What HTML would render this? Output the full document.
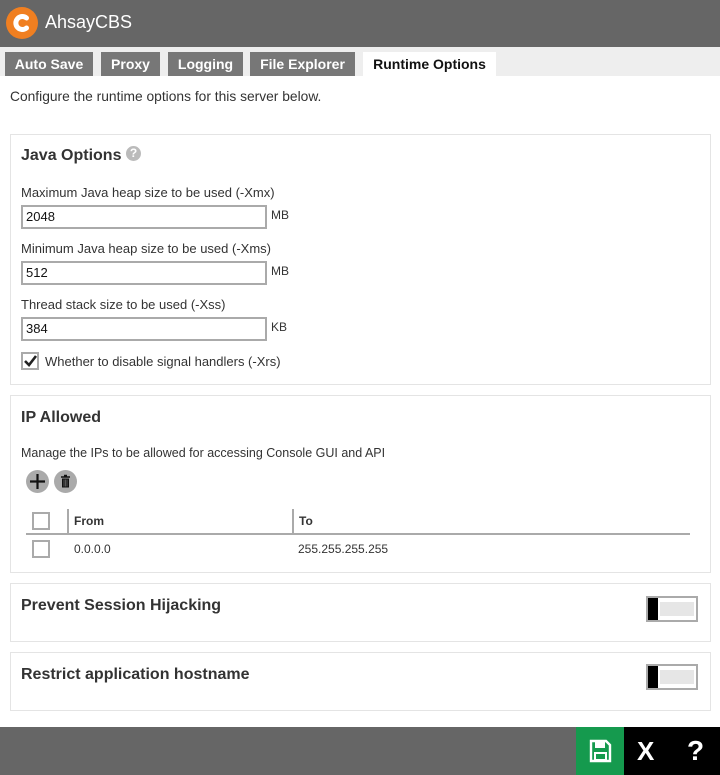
<!DOCTYPE html>
<html><head><meta charset="utf-8"><style>
*{box-sizing:border-box;margin:0;padding:0}
body{width:720px;height:775px;position:relative;background:#fff;font-family:"Liberation Sans",Arial,sans-serif;color:#333;overflow:hidden}
.a{position:absolute}
.hdr{left:0;top:0;width:720px;height:47px;background:#666}
.tabbar{left:0;top:47px;width:720px;height:29px;background:#eee}
.tab{top:52px;height:24px;background:#777;color:#fff;font-weight:bold;font-size:14px;line-height:24px;text-align:center}
.panel{left:10px;width:701px;border:1px solid #e4e4e4;background:#fff}
.h{font-weight:bold;font-size:16px;color:#333}
.lbl{font-size:13px;color:#333}
.inp{left:21px;width:246px;height:24px;border:2px solid #aaa;font-size:13px;line-height:20px;padding-left:3px;color:#111}
.unit{left:271px;font-size:12px;color:#333}
.cb{width:18px;height:18px;border:2px solid #aaa;background:#fff}
.tog{width:52px;height:26px;border:2px solid #aaa;background:#fff}
.tog i{position:absolute;left:0;top:0;width:10px;height:22px;background:#000}
.tog b{position:absolute;left:12px;top:4px;width:34px;height:14px;background:#e6e6e6}
</style></head><body>
<div class="a hdr"></div>
<div class="a" style="left:6px;top:7px;width:32px;height:32px;border-radius:50%;background:#f07f21"></div>
<svg class="a" style="left:6px;top:7px" width="32" height="32" viewBox="0 0 32 32"><path d="M20.5 11 A6.5 6.5 0 1 0 20.5 21" fill="none" stroke="#fff" stroke-width="5" stroke-linecap="round"/></svg>
<div class="a" style="left:45px;top:12px;font-size:18px;color:#fff">AhsayCBS</div>
<div class="a tabbar"></div>
<div class="a tab" style="left:5px;width:88px">Auto Save</div>
<div class="a tab" style="left:101px;width:59px">Proxy</div>
<div class="a tab" style="left:168px;width:75px">Logging</div>
<div class="a tab" style="left:250px;width:105px">File Explorer</div>
<div class="a tab" style="left:363px;width:133px;background:#fff;color:#111">Runtime Options</div>
<div class="a lbl" style="left:10px;top:89px;font-size:13.8px">Configure the runtime options for this server below.</div>

<div class="a panel" style="top:134px;height:251px"></div>
<div class="a h" style="left:21px;top:147px">Java Options</div>
<div class="a" style="left:126px;top:146px;width:15px;height:15px;border-radius:50%;background:#bbb;color:#fff;font-size:12px;font-weight:bold;text-align:center;line-height:15px">?</div>
<div class="a lbl" style="left:21px;top:185px">Maximum Java heap size to be used (-Xmx)</div>
<div class="a inp" style="top:205px">2048</div><div class="a unit" style="top:208px">MB</div>
<div class="a lbl" style="left:21px;top:241px">Minimum Java heap size to be used (-Xms)</div>
<div class="a inp" style="top:261px">512</div><div class="a unit" style="top:264px">MB</div>
<div class="a lbl" style="left:21px;top:297px">Thread stack size to be used (-Xss)</div>
<div class="a inp" style="top:317px">384</div><div class="a unit" style="top:320px">KB</div>
<div class="a cb" style="left:21px;top:352px"></div>
<svg class="a" style="left:21px;top:352px" width="18" height="18"><path d="M4 9 L8 13 L15 4" fill="none" stroke="#222" stroke-width="2.6"/></svg>
<div class="a lbl" style="left:45px;top:354px">Whether to disable signal handlers (-Xrs)</div>

<div class="a panel" style="top:395px;height:178px"></div>
<div class="a h" style="left:21px;top:409px">IP Allowed</div>
<div class="a lbl" style="left:21px;top:446px;font-size:12.5px">Manage the IPs to be allowed for accessing Console GUI and API</div>
<div class="a" style="left:26px;top:470px;width:23px;height:23px;border-radius:50%;background:#aaa"></div>
<svg class="a" style="left:26px;top:470px" width="23" height="23"><path d="M11.5 4V19M4 11.5H19" stroke="#111" stroke-width="2.2"/></svg>
<div class="a" style="left:54px;top:470px;width:23px;height:23px;border-radius:50%;background:#aaa"></div>
<svg class="a" style="left:54px;top:470px" width="23" height="23"><path d="M7 7H16M10 5.5H13" stroke="#111" stroke-width="1.6"/><rect x="8" y="8.5" width="7" height="9" fill="#111"/><path d="M10 9.5V16.5M11.5 9.5V16.5M13 9.5V16.5" stroke="#888" stroke-width=".6"/></svg>
<div class="a cb" style="left:32px;top:512px"></div>
<div class="a" style="left:67px;top:509px;width:2px;height:24px;background:#aaa"></div>
<div class="a" style="left:292px;top:509px;width:2px;height:24px;background:#aaa"></div>
<div class="a" style="left:26px;top:533px;width:664px;height:2px;background:#aaa"></div>
<div class="a" style="left:74px;top:514px;font-size:12px;font-weight:bold">From</div>
<div class="a" style="left:299px;top:514px;font-size:12px;font-weight:bold">To</div>
<div class="a cb" style="left:32px;top:540px"></div>
<div class="a" style="left:74px;top:542px;font-size:12px">0.0.0.0</div>
<div class="a" style="left:298px;top:542px;font-size:12px">255.255.255.255</div>

<div class="a panel" style="top:583px;height:59px"></div>
<div class="a h" style="left:21px;top:597px">Prevent Session Hijacking</div>
<div class="a tog" style="left:646px;top:596px"><i></i><b></b></div>
<div class="a panel" style="top:652px;height:59px"></div>
<div class="a h" style="left:21px;top:666px">Restrict application hostname</div>
<div class="a tog" style="left:646px;top:664px"><i></i><b></b></div>

<div class="a" style="left:0;top:727px;width:720px;height:48px;background:#666"></div>
<div class="a" style="left:576px;top:727px;width:48px;height:48px;background:#159a4e"></div>
<svg class="a" style="left:576px;top:727px" width="48" height="48"><path d="M15 14H30L34 18V34H15Z" fill="none" stroke="#fff" stroke-width="2.4"/><rect x="19" y="15" width="10" height="6" fill="#fff"/><rect x="19" y="26" width="11" height="7" fill="none" stroke="#fff" stroke-width="2"/></svg>
<div class="a" style="left:624px;top:727px;width:96px;height:48px;background:#000"></div>
<div class="a" style="left:637px;top:736px;color:#fff;font-size:26px;font-weight:bold">X</div>
<div class="a" style="left:687px;top:735px;color:#fff;font-size:28px;font-weight:bold">?</div>
</body></html>
